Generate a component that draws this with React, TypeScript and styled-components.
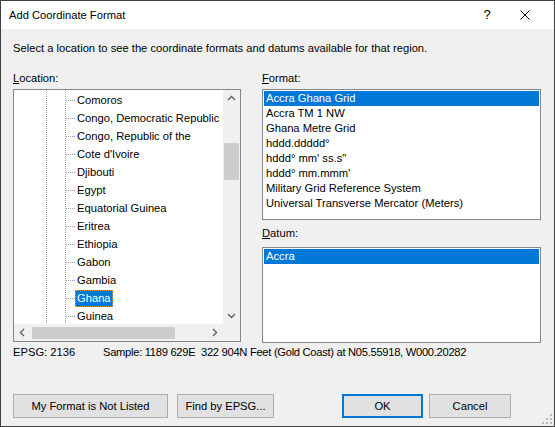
import React from "react"
import styled, { createGlobalStyle, css } from "styled-components"

const UI_FONT = `"Liberation Sans", Arial, sans-serif`
const SELECT_BLUE = "#0078d7"
const LIST_BORDER = "#828790"

const GlobalStyle = createGlobalStyle`
  html, body {
    margin: 0;
    padding: 0;
    background: #f0f0f0;
  }
`

const Dialog = styled.div`
  position: relative;
  width: 555px;
  height: 427px;
  box-sizing: border-box;
  border: 1px solid #404040;
  background: #f0f0f0;
  display: flex;
  flex-direction: column;
  font: 11.2px/16px ${UI_FONT};
  color: #000;
`

const TitleBar = styled.div`
  height: 28px;
  flex-shrink: 0;
  background: #fff;
  display: flex;
  align-items: center;
  padding-left: 8px;
`

const TitleButtons = styled.div`
  margin-left: auto;
  display: flex;
  padding-right: 10px;
`

const TitleButton = styled.div`
  width: 38px;
  height: 28px;
  display: flex;
  align-items: center;
  justify-content: center;
  font-size: 13px;
`

const Body = styled.div`
  flex: 1;
  display: flex;
  flex-direction: column;
  padding: 11px 13px 8px 12px;
`

const Columns = styled.div`
  margin-top: 14px;
  display: grid;
  grid-template-columns: 228px 1fr;
  column-gap: 21px;
`

const Column = styled.div`
  display: flex;
  flex-direction: column;
`

const FieldLabel = styled.div<{ $gap?: number }>`
  margin-top: ${({ $gap }) => $gap ?? 0}px;
  margin-bottom: ${({ $gap }) => ($gap ? 6 : 3)}px;
`

const TreeBox = styled.div`
  height: 253px;
  box-sizing: border-box;
  border: 1px solid ${LIST_BORDER};
  background: #fff;
  display: grid;
  grid-template-columns: 1fr 17px;
  grid-template-rows: 1fr 17px;
  overflow: hidden;
`

// dotted guides for the two ancestor levels of the tree
const dots = (dir: string) =>
  `repeating-linear-gradient(${dir}, #a0a0a0 0 1px, transparent 1px 2px)`

const TreeViewport = styled.div`
  overflow: hidden;
  padding-top: 1px;
  background-image: ${dots("to bottom")}, ${dots("to bottom")};
  background-size: 1px 100%;
  background-position: 32px 0, 51px 0;
  background-repeat: no-repeat;
`

const TreeRow = styled.div`
  height: 18px;
  display: flex;
  align-items: center;
  padding-left: 52px;
  white-space: nowrap;
`

const Connector = styled.span`
  width: 9px;
  height: 1px;
  flex-shrink: 0;
  background-image: ${dots("to right")};
`

const NodeLabel = styled.span<{ $selected?: boolean }>`
  line-height: 17px;
  padding: 0 2px;
  ${({ $selected }) =>
    $selected &&
    css`
      background: ${SELECT_BLUE};
      color: #fff;
      outline: 1px dotted #e0a040;
      outline-offset: -1px;
    `}
`

const VScroll = styled.div`
  background: #f0f0f0;
  display: flex;
  flex-direction: column;
`

const HScroll = styled.div`
  background: #f0f0f0;
  display: flex;
  align-items: center;
`

const ScrollArrow = styled.div`
  width: 17px;
  height: 17px;
  flex-shrink: 0;
  display: flex;
  align-items: center;
  justify-content: center;
`

const ScrollTrack = styled.div<{ $vertical?: boolean }>`
  flex: 1;
  display: flex;
  flex-direction: ${({ $vertical }) => ($vertical ? "column" : "row")};
  align-items: center;
`

const Thumb = styled.div<{ $vertical?: boolean }>`
  background: #cdcdcd;
  ${({ $vertical }) =>
    $vertical
      ? css`
          width: 15px;
        `
      : css`
          height: 12px;
        `}
`

const Corner = styled.div`
  background: #f0f0f0;
`

const ListBox = styled.div<{ $height: number }>`
  height: ${({ $height }) => $height}px;
  box-sizing: border-box;
  border: 1px solid ${LIST_BORDER};
  background: #fff;
  padding: 1px;
`

const ListItem = styled.div<{ $selected?: boolean }>`
  height: 15px;
  line-height: 15px;
  padding: 0 2px;
  white-space: nowrap;
  ${({ $selected }) =>
    $selected &&
    css`
      background: ${SELECT_BLUE};
      color: #fff;
    `}
`

const InfoLine = styled.div`
  margin-top: 1px;
  display: flex;
  white-space: pre;
`

const EpsgCode = styled.span`
  width: 90px;
`

const SampleText = styled.span`
  letter-spacing: -0.3px;
`

const Footer = styled.div`
  margin-top: auto;
  display: flex;
  padding-right: 30px;
`

const ButtonGroup = styled.div<{ $gap: number; $right?: boolean }>`
  display: flex;
  gap: ${({ $gap }) => $gap}px;
  margin-left: ${({ $right }) => ($right ? "auto" : "0")};
`

const Button = styled.button<{ $width: number; $default?: boolean }>`
  width: ${({ $width }) => $width}px;
  height: 24px;
  box-sizing: border-box;
  padding: 0;
  border: 1px solid #adadad;
  background: #e1e1e1;
  font: inherit;
  color: #000;
  ${({ $default }) =>
    $default &&
    css`
      border: 2px solid ${SELECT_BLUE};
    `}
`

const SizeGrip = styled.svg`
  position: absolute;
  right: 1px;
  bottom: 1px;
`

const Chevron = ({ rotate }: { rotate: number }) => (
  <svg width="9" height="9" viewBox="0 0 9 9" style={{ transform: `rotate(${rotate}deg)` }}>
    <polyline points="1,6 4.5,2.5 8,6" fill="none" stroke="#606060" strokeWidth="1.4" />
  </svg>
)

const countries = [
  "Comoros",
  "Congo, Democratic Republic of the",
  "Congo, Republic of the",
  "Cote d'Ivoire",
  "Djibouti",
  "Egypt",
  "Equatorial Guinea",
  "Eritrea",
  "Ethiopia",
  "Gabon",
  "Gambia",
  "Ghana",
  "Guinea",
]

const formats = [
  "Accra Ghana Grid",
  "Accra TM 1 NW",
  "Ghana Metre Grid",
  "hddd.ddddd°",
  "hddd° mm' ss.s\"",
  "hddd° mm.mmm'",
  "Military Grid Reference System",
  "Universal Transverse Mercator (Meters)",
]

export default function App() {
  const location = "Ghana"
  const format = "Accra Ghana Grid"

  return (
    <>
      <GlobalStyle />
      <Dialog>
        <TitleBar>
          Add Coordinate Format
          <TitleButtons>
            <TitleButton>?</TitleButton>
            <TitleButton>
              <svg width="10" height="10" viewBox="0 0 10 10">
                <path d="M0.5 0.5 L9.5 9.5 M9.5 0.5 L0.5 9.5" stroke="#000" strokeWidth="1" />
              </svg>
            </TitleButton>
          </TitleButtons>
        </TitleBar>

        <Body>
          <div>Select a location to see the coordinate formats and datums available for that region.</div>

          <Columns>
            <Column>
              <FieldLabel>
                <u>L</u>ocation:
              </FieldLabel>
              <TreeBox>
                <TreeViewport>
                  {countries.map(name => (
                    <TreeRow key={name}>
                      <Connector />
                      <NodeLabel $selected={name === location}>{name}</NodeLabel>
                    </TreeRow>
                  ))}
                </TreeViewport>
                <VScroll>
                  <ScrollArrow>
                    <Chevron rotate={0} />
                  </ScrollArrow>
                  <ScrollTrack $vertical>
                    <Thumb $vertical style={{ marginTop: 36, height: 37 }} />
                  </ScrollTrack>
                  <ScrollArrow>
                    <Chevron rotate={180} />
                  </ScrollArrow>
                </VScroll>
                <HScroll>
                  <ScrollArrow>
                    <Chevron rotate={-90} />
                  </ScrollArrow>
                  <ScrollTrack>
                    <Thumb style={{ marginLeft: 1, width: 143 }} />
                  </ScrollTrack>
                  <ScrollArrow>
                    <Chevron rotate={90} />
                  </ScrollArrow>
                </HScroll>
                <Corner />
              </TreeBox>
            </Column>

            <Column>
              <FieldLabel>
                <u>F</u>ormat:
              </FieldLabel>
              <ListBox $height={131}>
                {formats.map(f => (
                  <ListItem key={f} $selected={f === format}>
                    {f}
                  </ListItem>
                ))}
              </ListBox>
              <FieldLabel $gap={5}>
                <u>D</u>atum:
              </FieldLabel>
              <ListBox $height={96}>
                <ListItem $selected>Accra</ListItem>
              </ListBox>
            </Column>
          </Columns>

          <InfoLine>
            <EpsgCode>EPSG: 2136</EpsgCode>
            <SampleText>Sample: 1189 629E  322 904N Feet (Gold Coast) at N05.55918, W000.20282</SampleText>
          </InfoLine>

          <Footer>
            <ButtonGroup $gap={9}>
              <Button $width={155}>My Format is Not Listed</Button>
              <Button $width={97}>Find by EPSG...</Button>
            </ButtonGroup>
            <ButtonGroup $gap={6} $right>
              <Button $width={81} $default>
                OK
              </Button>
              <Button $width={82}>Cancel</Button>
            </ButtonGroup>
          </Footer>
        </Body>

        <SizeGrip width="12" height="12" viewBox="0 0 12 12">
          {[
            [9, 1],
            [9, 5],
            [5, 5],
            [9, 9],
            [5, 9],
            [1, 9],
          ].map(([x, y]) => (
            <rect key={`${x}-${y}`} x={x} y={y} width="2" height="2" fill="#b8b8b8" />
          ))}
        </SizeGrip>
      </Dialog>
    </>
  )
}
